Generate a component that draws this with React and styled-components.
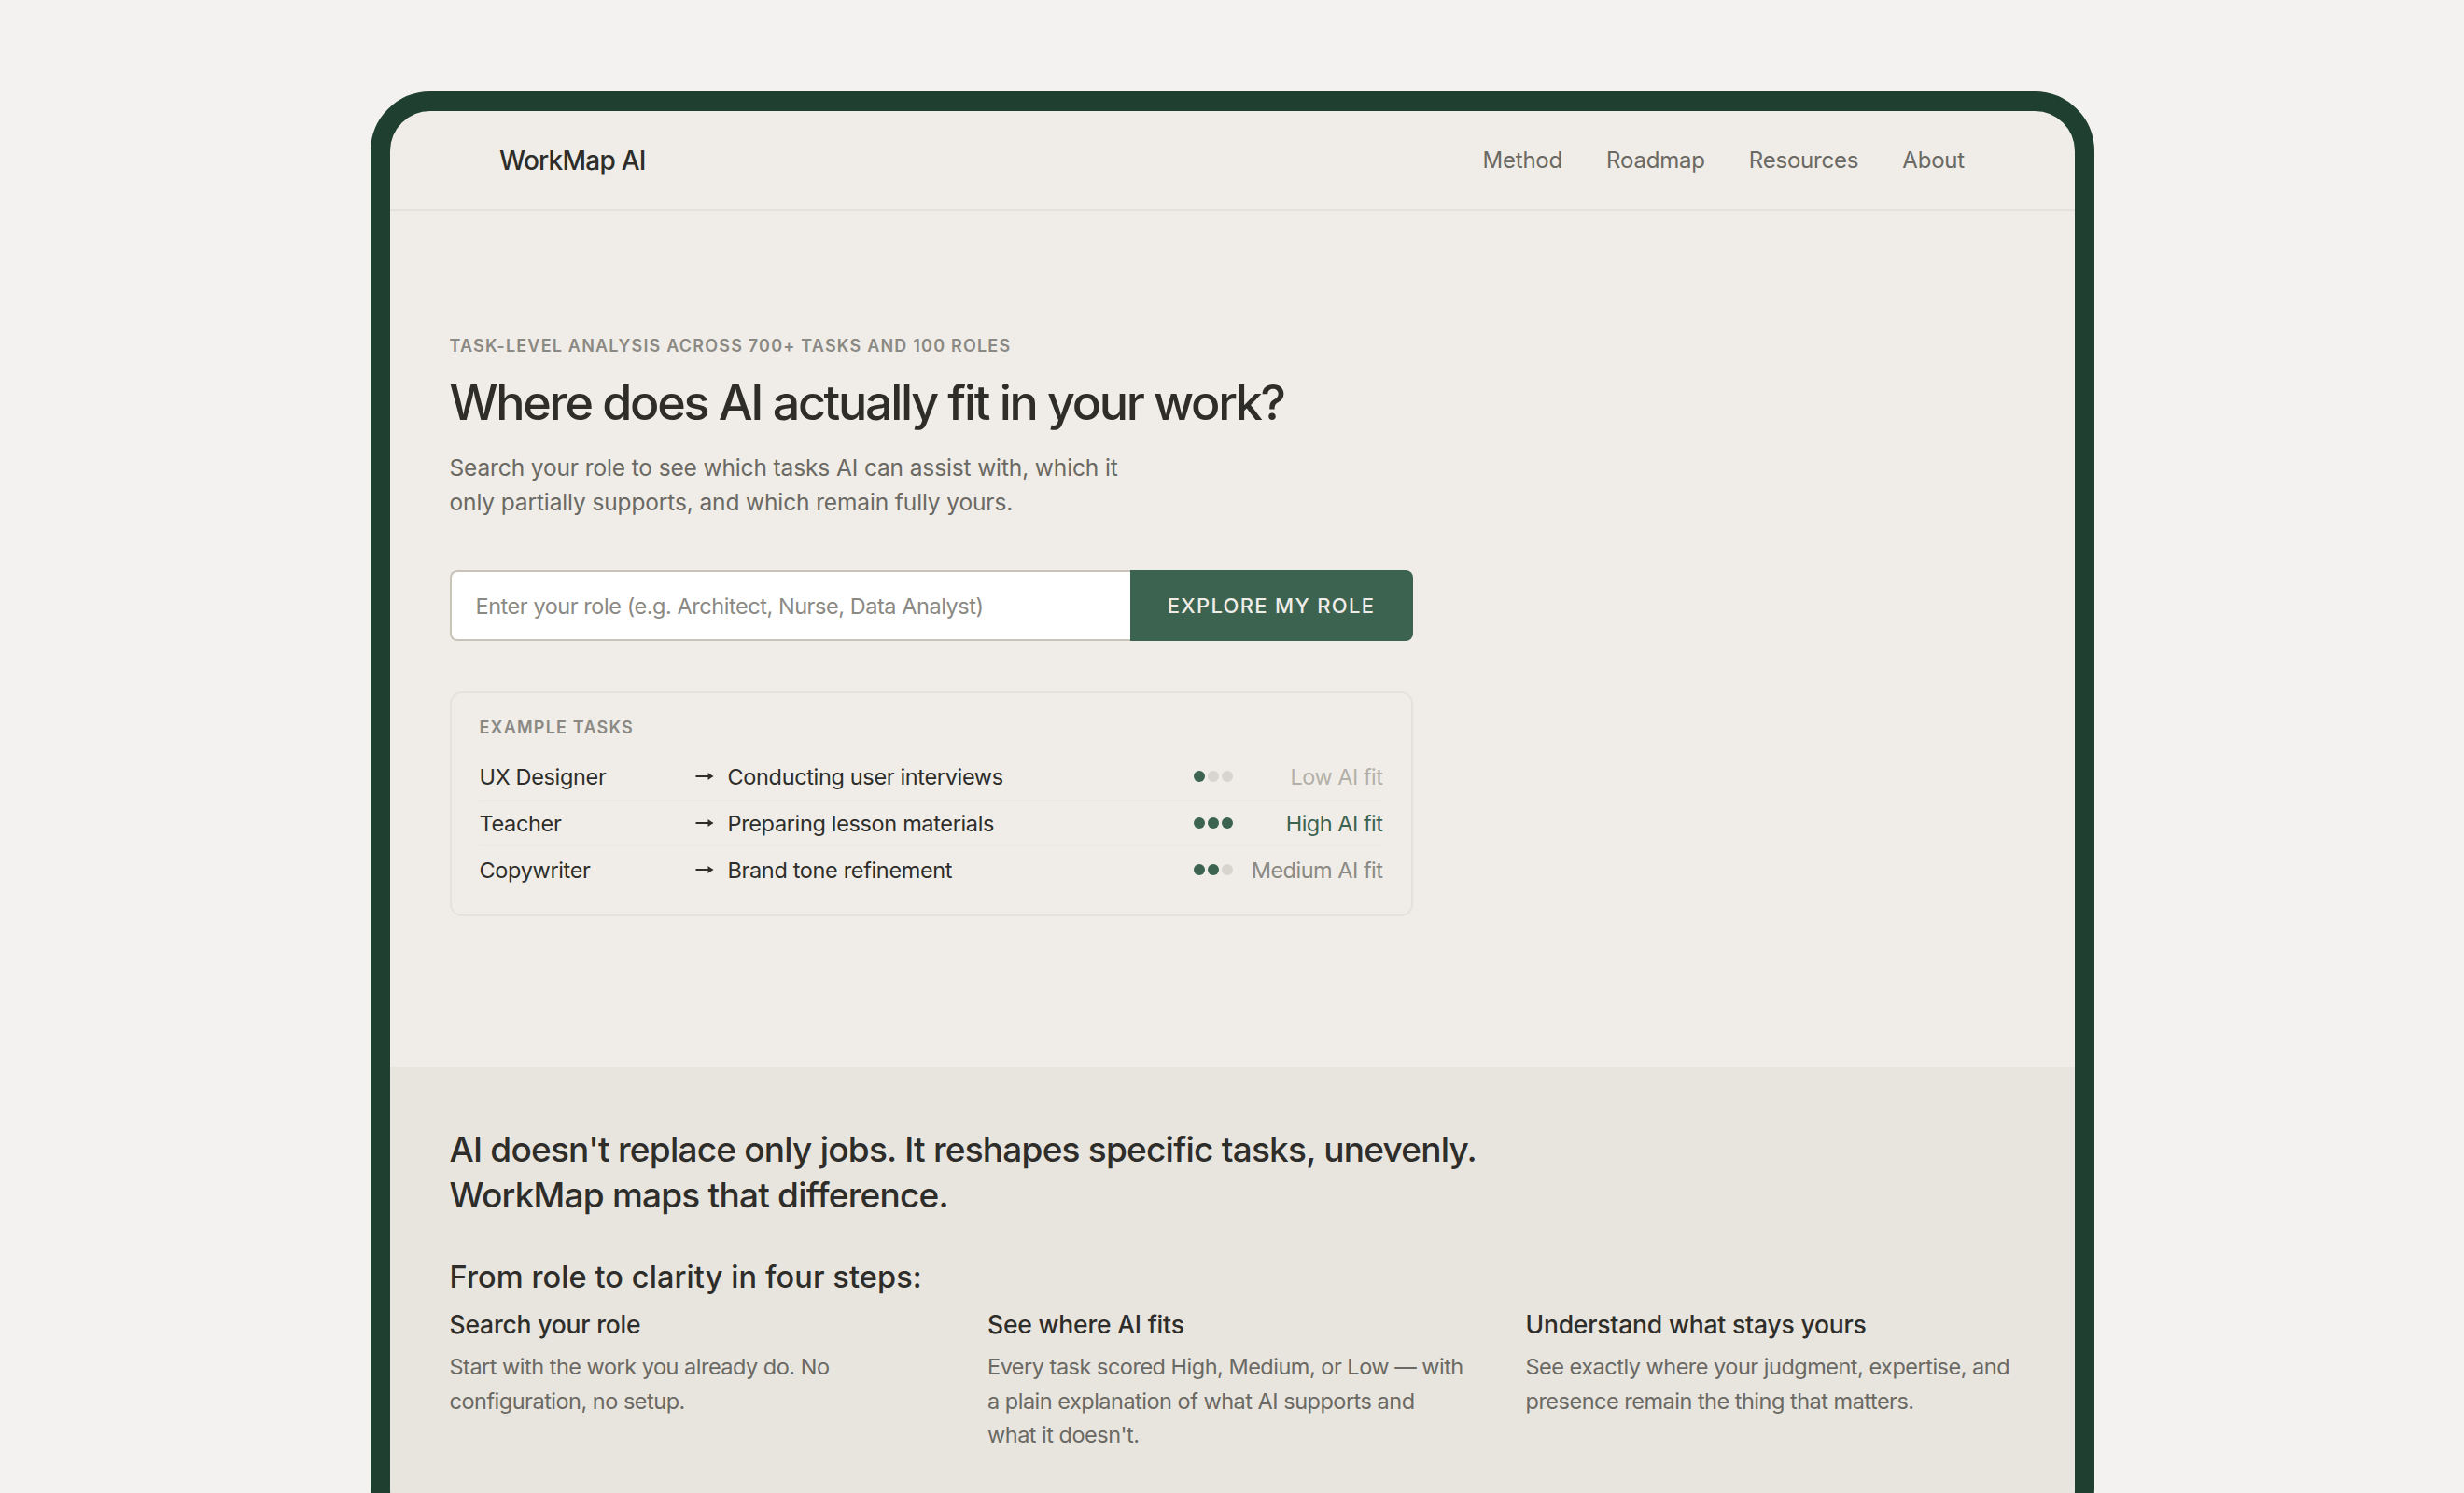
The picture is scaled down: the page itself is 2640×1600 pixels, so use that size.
import styled, { createGlobalStyle } from 'styled-components'

const GlobalStyle = createGlobalStyle`
  html, body {
    margin: 0;
    height: 1600px;
    overflow: hidden;
    background: #f4f2f0;
  }
  * {
    box-sizing: border-box;
  }
`

const Page = styled.div`
  padding: 98px 396px 0 397px;
  font-family: Inter, "Liberation Sans", sans-serif;
  color: #2e2d2a;
`

const Frame = styled.div`
  border: 21px solid #1f3f31;
  border-radius: 64px;
  background: #f0ede8;
  overflow: hidden;
`

const Nav = styled.nav`
  display: flex;
  align-items: center;
  justify-content: space-between;
  height: 107px;
  padding: 0 118px 0 117px;
  border-bottom: 2px solid #e5e2dc;
`

const Logo = styled.div`
  font-size: 28px;
  font-weight: 500;
  letter-spacing: -0.75px;
`

const NavLinks = styled.div`
  display: flex;
  gap: 47px;
`

const NavLink = styled.a`
  font-size: 24px;
  color: #6b6963;
  letter-spacing: -0.2px;
`

const Hero = styled.section`
  padding: 131px 64px 160px 63.5px;
  height: 917px;
`

const Eyebrow = styled.div`
  font-size: 18px;
  font-weight: 600;
  line-height: 28px;
  letter-spacing: 1.2px;
  color: #8b8983;
`

const Title = styled.h1`
  margin: 14px 0 0;
  font-size: 52px;
  font-weight: 500;
  line-height: 66px;
  letter-spacing: -2.3px;
`

const Lead = styled.p`
  margin: 18px 0 0;
  width: 760px;
  font-size: 24.5px;
  line-height: 37px;
  letter-spacing: -0.13px;
  color: #6b6963;
`

const SearchRow = styled.form`
  display: flex;
  width: 1032px;
  height: 76px;
  margin-top: 54px;
`

const RoleInput = styled.input`
  flex: 1;
  min-width: 0;
  padding: 0 26px;
  border: 2px solid #c9c4ba;
  border-right: 0;
  border-radius: 8px 0 0 8px;
  background: #fff;
  font-family: inherit;
  font-size: 23.5px;
  letter-spacing: -0.45px;
  outline: none;
  &::placeholder {
    color: #8b8983;
    opacity: 1;
  }
`

const ExploreButton = styled.button`
  width: 303px;
  border: 0;
  border-radius: 0 8px 8px 0;
  background: #3c6350;
  color: #f0ede8;
  font-family: inherit;
  font-size: 22px;
  font-weight: 500;
  letter-spacing: 1.3px;
`

const TaskCard = styled.div`
  width: 1032px;
  height: 241px;
  margin-top: 54px;
  padding: 24px 30px 0;
  border: 2px solid #e5e2dc;
  border-radius: 13px;
`

const TaskLabel = styled.div`
  font-size: 18px;
  font-weight: 600;
  line-height: 26px;
  letter-spacing: 1.2px;
  color: #8b8983;
  margin-bottom: 15px;
`

const TaskRow = styled.div`
  display: flex;
  align-items: center;
  height: 49.7px;
  font-size: 23.5px;
  letter-spacing: -0.35px;
  border-bottom: ${p => (p.$last ? '0' : '1px solid #eae7e1')};
`

const Role = styled.div`
  width: 231px;
`

const Arrow = styled.svg`
  width: 20px;
  height: 14px;
  margin-right: 15px;
  color: #2e2d2a;
`

const TaskName = styled.div`
  flex: 1;
`

const Dots = styled.div`
  display: flex;
  gap: 3px;
`

const Dot = styled.span`
  width: 12px;
  height: 12px;
  border-radius: 50%;
  background: ${p => (p.$on ? '#3c6350' : '#d8d5cf')};
`

const Fit = styled.div`
  width: 160.5px;
  text-align: right;
  letter-spacing: -0.5px;
  color: ${p => p.$color};
`

const Explain = styled.section`
  padding: 65px 64px 80px 63.5px;
  background: #e8e5df;
`

const Statement = styled.h2`
  margin: 0;
  width: 1200px;
  font-size: 37px;
  font-weight: 500;
  line-height: 48.5px;
  letter-spacing: -0.78px;
`

const StepsTitle = styled.h3`
  margin: 42px 0 0;
  font-size: 32.5px;
  font-weight: 500;
  line-height: 44px;
  letter-spacing: 0.1px;
`

const Steps = styled.div`
  display: grid;
  grid-template-columns: repeat(3, 1fr);
  gap: 52px;
  margin-top: 10px;
`

const StepTitle = styled.h4`
  margin: 0;
  font-size: 26.5px;
  font-weight: 500;
  line-height: 36px;
  letter-spacing: -0.2px;
`

const StepBody = styled.p`
  margin: 10px 0 0;
  font-size: 23.5px;
  line-height: 36.7px;
  letter-spacing: -0.5px;
  color: #6b6963;
`

const tasks = [
  { role: 'UX Designer', task: 'Conducting user interviews', score: 1, fit: 'Low AI fit', color: '#b3b0a9' },
  { role: 'Teacher', task: 'Preparing lesson materials', score: 3, fit: 'High AI fit', color: '#3c6350' },
  { role: 'Copywriter', task: 'Brand tone refinement', score: 2, fit: 'Medium AI fit', color: '#8b8983' },
]

const steps = [
  {
    title: 'Search your role',
    body: <>Start with the work you already do. No<br />configuration, no setup.</>,
  },
  {
    title: 'See where AI fits',
    body: <>Every task scored High, Medium, or Low — with<br />a plain explanation of what AI supports and<br />what it doesn't.</>,
  },
  {
    title: 'Understand what stays yours',
    body: <>See exactly where your judgment, expertise, and<br />presence remain the thing that matters.</>,
  },
]

export default function App() {
  return (
    <Page>
      <GlobalStyle />
      <Frame>
        <Nav>
          <Logo>WorkMap AI</Logo>
          <NavLinks>
            <NavLink>Method</NavLink>
            <NavLink>Roadmap</NavLink>
            <NavLink>Resources</NavLink>
            <NavLink>About</NavLink>
          </NavLinks>
        </Nav>
        <Hero>
          <Eyebrow>TASK-LEVEL ANALYSIS ACROSS 700+ TASKS AND 100 ROLES</Eyebrow>
          <Title>Where does AI actually fit in your work?</Title>
          <Lead>
            Search your role to see which tasks AI can assist with, which it only partially supports, and which remain
            fully yours.
          </Lead>
          <SearchRow>
            <RoleInput placeholder="Enter your role (e.g. Architect, Nurse, Data Analyst)" />
            <ExploreButton type="button">EXPLORE MY ROLE</ExploreButton>
          </SearchRow>
          <TaskCard>
            <TaskLabel>EXAMPLE TASKS</TaskLabel>
            {tasks.map((t, i) => (
              <TaskRow key={t.role} $last={i === tasks.length - 1}>
                <Role>{t.role}</Role>
                <Arrow viewBox="0 0 20 14" fill="currentColor">
                  <path d="M0.5 6h13V3l6 4-6 4V8h-13z" />
                </Arrow>
                <TaskName>{t.task}</TaskName>
                <Dots>
                  {[1, 2, 3].map(n => (
                    <Dot key={n} $on={n <= t.score} />
                  ))}
                </Dots>
                <Fit $color={t.color}>{t.fit}</Fit>
              </TaskRow>
            ))}
          </TaskCard>
        </Hero>
        <Explain>
          <Statement>AI doesn't replace only jobs. It reshapes specific tasks, unevenly. WorkMap maps that difference.</Statement>
          <StepsTitle>From role to clarity in four steps:</StepsTitle>
          <Steps>
            {steps.map(s => (
              <div key={s.title}>
                <StepTitle>{s.title}</StepTitle>
                <StepBody>{s.body}</StepBody>
              </div>
            ))}
          </Steps>
        </Explain>
      </Frame>
    </Page>
  )
}
